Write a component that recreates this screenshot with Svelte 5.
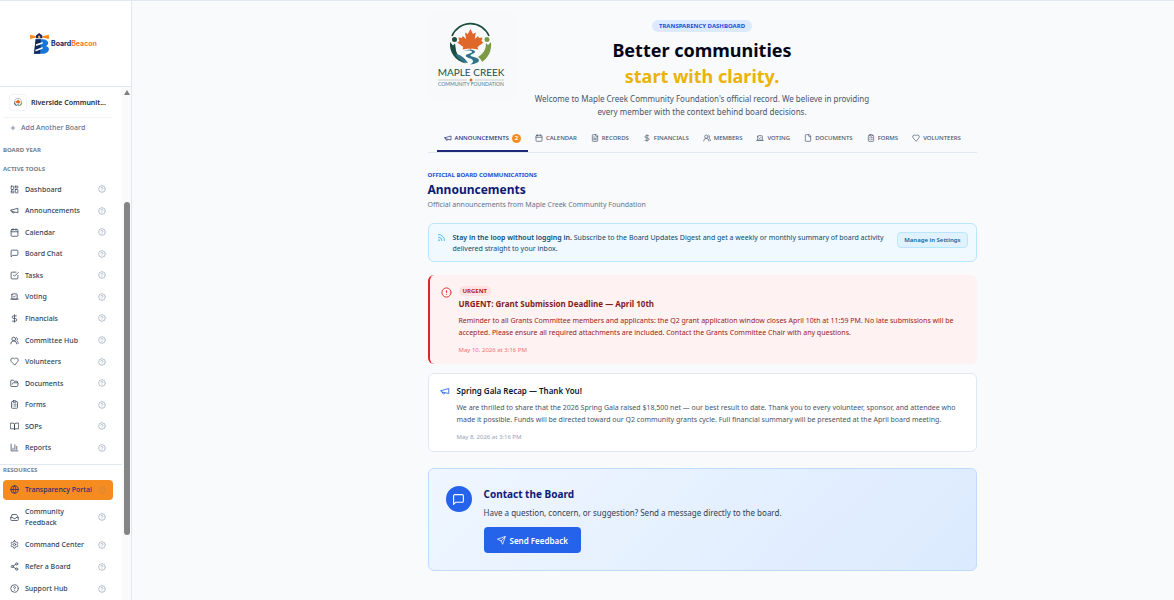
<script lang="ts">
	type NavItem = { label: string; icon: string };

	const icons: Record<string, string> = {
		dashboard: 'M4 3h5a1 1 0 0 1 1 1v7a1 1 0 0 1-1 1H4a1 1 0 0 1-1-1V4a1 1 0 0 1 1-1zM15 3h5a1 1 0 0 1 1 1v3a1 1 0 0 1-1 1h-5a1 1 0 0 1-1-1V4a1 1 0 0 1 1-1zM15 12h5a1 1 0 0 1 1 1v7a1 1 0 0 1-1 1h-5a1 1 0 0 1-1-1v-7a1 1 0 0 1 1-1zM4 16h5a1 1 0 0 1 1 1v3a1 1 0 0 1-1 1H4a1 1 0 0 1-1-1v-3a1 1 0 0 1 1-1z',
		megaphone: 'm3 11 18-5v12L3 14v-3zM11.6 16.8a3 3 0 1 1-5.8-1.6',
		calendar: 'M8 2v4M16 2v4M3 10h18M5 4h14a2 2 0 0 1 2 2v14a2 2 0 0 1-2 2H5a2 2 0 0 1-2-2V6a2 2 0 0 1 2-2z',
		message: 'M21 15a2 2 0 0 1-2 2H7l-4 4V5a2 2 0 0 1 2-2h14a2 2 0 0 1 2 2z',
		check: 'm9 11 3 3L22 4M21 12v7a2 2 0 0 1-2 2H5a2 2 0 0 1-2-2V5a2 2 0 0 1 2-2h11',
		vote: 'm9 12 2 2 4-4M5 7c0-1.1.9-2 2-2h10a2 2 0 0 1 2 2v12H5V7ZM22 19H2',
		dollar: 'M12 2v20M17 5H9.5a3.5 3.5 0 0 0 0 7h5a3.5 3.5 0 0 1 0 7H6',
		users: 'M18 21a8 8 0 0 0-16 0M15 8A5 5 0 1 1 5 8a5 5 0 0 1 10 0M22 20c0-3.37-2-6.5-4-8a5 5 0 0 0-.45-8.3',
		heart: 'M19 14c1.49-1.46 3-3.21 3-5.5A5.5 5.5 0 0 0 16.5 3c-1.76 0-3 .5-4.5 2-1.5-1.5-2.74-2-4.5-2A5.5 5.5 0 0 0 2 8.5c0 2.3 1.5 4.05 3 5.5l7 7Z',
		folder: 'm6 14 1.5-2.9A2 2 0 0 1 9.24 10H20a2 2 0 0 1 1.94 2.5l-1.54 6a2 2 0 0 1-1.95 1.5H4a2 2 0 0 1-2-2V5a2 2 0 0 1 2-2h3.9a2 2 0 0 1 1.69.9l.81 1.2a2 2 0 0 0 1.67.9H18a2 2 0 0 1 2 2v2',
		clipboard: 'M9 2h6a1 1 0 0 1 1 1v2a1 1 0 0 1-1 1H9a1 1 0 0 1-1-1V3a1 1 0 0 1 1-1zM16 4h2a2 2 0 0 1 2 2v14a2 2 0 0 1-2 2H6a2 2 0 0 1-2-2V6a2 2 0 0 1 2-2h2M12 11h4M12 16h4M8 11h.01M8 16h.01',
		book: 'M2 3h6a4 4 0 0 1 4 4v14a3 3 0 0 0-3-3H2zM22 3h-6a4 4 0 0 0-4 4v14a3 3 0 0 1 3-3h7z',
		chart: 'M3 3v18h18M18 17V9M13 17V5M8 17v-3',
		globe: 'M22 12a10 10 0 1 1-20 0 10 10 0 0 1 20 0M12 2a14.5 14.5 0 0 0 0 20 14.5 14.5 0 0 0 0-20M2 12h20',
		inbox: 'M22 12h-6l-2 3h-4l-2-3H2M5.45 5.11 2 12v6a2 2 0 0 0 2 2h16a2 2 0 0 0 2-2v-6l-3.45-6.89A2 2 0 0 0 16.76 4H7.24a2 2 0 0 0-1.79 1.11z',
		settings: 'M12.22 2h-.44a2 2 0 0 0-2 2v.18a2 2 0 0 1-1 1.73l-.43.25a2 2 0 0 1-2 0l-.15-.08a2 2 0 0 0-2.73.73l-.22.38a2 2 0 0 0 .73 2.73l.15.1a2 2 0 0 1 1 1.72v.51a2 2 0 0 1-1 1.74l-.15.09a2 2 0 0 0-.73 2.73l.22.38a2 2 0 0 0 2.73.73l.15-.08a2 2 0 0 1 2 0l.43.25a2 2 0 0 1 1 1.73V20a2 2 0 0 0 2 2h.44a2 2 0 0 0 2-2v-.18a2 2 0 0 1 1-1.73l.43-.25a2 2 0 0 1 2 0l.15.08a2 2 0 0 0 2.73-.73l.22-.39a2 2 0 0 0-.73-2.73l-.15-.08a2 2 0 0 1-1-1.74v-.5a2 2 0 0 1 1-1.74l.15-.09a2 2 0 0 0 .73-2.73l-.22-.38a2 2 0 0 0-2.73-.73l-.15.08a2 2 0 0 1-2 0l-.43-.25a2 2 0 0 1-1-1.73V4a2 2 0 0 0-2-2zM15 12a3 3 0 1 1-6 0 3 3 0 0 1 6 0',
		share: 'M21 5a3 3 0 1 1-6 0 3 3 0 0 1 6 0M9 12a3 3 0 1 1-6 0 3 3 0 0 1 6 0M21 19a3 3 0 1 1-6 0 3 3 0 0 1 6 0M8.59 13.51l6.83 3.98M15.41 6.51l-6.82 3.98',
		help: 'M22 12a10 10 0 1 1-20 0 10 10 0 0 1 20 0M9.09 9a3 3 0 0 1 5.83 1c0 2-3 3-3 3M12 17h.01',
		alert: 'M22 12a10 10 0 1 1-20 0 10 10 0 0 1 20 0M12 8v4M12 16h.01',
		rss: 'M4 11a9 9 0 0 1 9 9M4 4a16 16 0 0 1 16 16M6 19a1 1 0 1 1-2 0 1 1 0 0 1 2 0',
		send: 'm22 2-7 20-4-9-9-4ZM22 2 11 13',
		file: 'M15 2H6a2 2 0 0 0-2 2v16a2 2 0 0 0 2 2h12a2 2 0 0 0 2-2V7ZM14 2v4a2 2 0 0 0 2 2h4',
		fileText: 'M15 2H6a2 2 0 0 0-2 2v16a2 2 0 0 0 2 2h12a2 2 0 0 0 2-2V7ZM14 2v4a2 2 0 0 0 2 2h4M10 9H8M16 13H8M16 17H8',
		plus: 'M5 12h14M12 5v14'
	};

	const tools: NavItem[] = [
		{ label: 'Dashboard', icon: 'dashboard' },
		{ label: 'Announcements', icon: 'megaphone' },
		{ label: 'Calendar', icon: 'calendar' },
		{ label: 'Board Chat', icon: 'message' },
		{ label: 'Tasks', icon: 'check' },
		{ label: 'Voting', icon: 'vote' },
		{ label: 'Financials', icon: 'dollar' },
		{ label: 'Committee Hub', icon: 'users' },
		{ label: 'Volunteers', icon: 'heart' },
		{ label: 'Documents', icon: 'folder' },
		{ label: 'Forms', icon: 'clipboard' },
		{ label: 'SOPs', icon: 'book' },
		{ label: 'Reports', icon: 'chart' }
	];

	const resources: NavItem[] = [
		{ label: 'Transparency Portal', icon: 'globe' },
		{ label: 'Community Feedback', icon: 'inbox' },
		{ label: 'Command Center', icon: 'settings' },
		{ label: 'Refer a Board', icon: 'share' },
		{ label: 'Support Hub', icon: 'help' }
	];

	const tabs: (NavItem & { count?: number })[] = [
		{ label: 'Announcements', icon: 'megaphone', count: 2 },
		{ label: 'Calendar', icon: 'calendar' },
		{ label: 'Records', icon: 'fileText' },
		{ label: 'Financials', icon: 'dollar' },
		{ label: 'Members', icon: 'users' },
		{ label: 'Voting', icon: 'vote' },
		{ label: 'Documents', icon: 'file' },
		{ label: 'Forms', icon: 'clipboard' },
		{ label: 'Volunteers', icon: 'heart' }
	];

	let activePage = $state('Transparency Portal');
	let activeTab = $state('Announcements');
</script>

{#snippet icon(name: string)}
	<svg class="icon" viewBox="0 0 24 24" aria-hidden="true"><path d={icons[name]} /></svg>
{/snippet}

{#snippet navItem(item: NavItem)}
	<a
		href="#{item.icon}"
		class="nav-item"
		class:active={activePage === item.label}
		onclick={() => (activePage = item.label)}
	>
		{@render icon(item.icon)}
		<span class="nav-label">{item.label}</span>
		<span class="hint">{@render icon('help')}</span>
	</a>
{/snippet}

{#snippet crest()}
	<path d="M14 16a20 20 0 0 1 37 0" fill="none" stroke="#1d4d3e" stroke-width="1.6" />
	<path d="M12 22c-1 10 5 19 16 21.500-6-5-9-9-10-13l-1-7-2 2z" fill="#1d4d3e" />
	<path d="M53 22c1 9-3 16-9 20-1-3-3-4-4-5 5-3 8-7 8-14l2 2z" fill="#7c9a45" />
	<circle cx="16.500" cy="19.500" r="2.500" fill="#1d4d3e" />
	<circle cx="49" cy="19.500" r="2.500" fill="#7c9a45" />
	<path
		d="M32.500 9l2.500 5 2.800-1.500-1 6.500 3.200-3 1 2 3.500-.5-1 3.500 2 1.500-6 4.500.8 2.500-7-1-.4 3.500h-1l-.4-3.500-7 1 .8-2.500-6-4.500 2-1.500-1-3.500 3.500.5 1-2 3.200 3-1-6.500 2.800 1.500z"
		fill="#e0672a"
	/>
	<path d="M22 31c8-3 14-2 14 1 0 2-8 2-6 4 1 1 8 1 9 4 0 2-2 3-4 4h-6c4-3 3-4 0-5-5-2-6-4 0-6 1-1-3-2-7-2z" fill="#fff" />
	<path d="M24 31.500c6-1.500 10-1 10 .5s-8 2-6 4.500c1 1.500 7 2 7 4.500 0 1.500-1 2.500-3 3.500 5-.5 9-2 9-4.500-1-3-8-3-8.500-4.500 0-1.500 5-2 4.500-4-.5-2-7-2.500-13 0zM17 34c5 0 10 4 13 9-5 0-10-4-13-9z" fill="#2f7489" />
{/snippet}

<div class="app">
	<aside class="sidebar">
		<a class="brand" href="#home" aria-label="BoardBeacon">
			<svg class="beacon" viewBox="0 0 54 60" aria-hidden="true">
				<path d="M0 5l17 4v4L0 17zM54 5L35 9v4l19 4z" fill="#f58a1f" />
				<path d="M26 0l9 7v8H17V7z" fill="#14275f" />
				<path d="M23 8h6v6h-6z" fill="#ffb13b" />
				<path d="M16 18h22c17 2 17 16 7 19 14 3 11 20-5 22H12z" fill="#1677d8" />
				<path d="M16 18h15l-2 41H11z" fill="#14275f" />
				<path d="M17 32l19-6v5l-19 6zM16 48l20-8v5l-21 8z" fill="#fff" />
			</svg>
			<span class="brand-name">Board<span>Beacon</span></span>
		</a>

		<div class="scroll-area">
			<nav>
				<button class="board">
					<span class="board-logo">
						<svg viewBox="8 2 48 46" aria-hidden="true">{@render crest()}</svg>
					</span>
					<span class="board-name">Riverside Communit...</span>
				</button>
				<button class="add-board">{@render icon('plus')} Add Another Board</button>
				<h2 class="year">Board Year</h2>
				<h2>Active Tools</h2>
				<div class="tools">
					{#each tools as item}
						{@render navItem(item)}
					{/each}
				</div>
				<div class="resources">
					<h2>Resources</h2>
					{#each resources as item}
						{@render navItem(item)}
					{/each}
				</div>
			</nav>
			<div class="scrollbar">
				<span class="arrow"></span>
				<span class="thumb"></span>
			</div>
		</div>
	</aside>

	<main>
		<div class="content">
			<header>
				<svg class="org-logo" viewBox="0 0 86 86" role="img" aria-label="Maple Creek Community Foundation">
					<rect width="86" height="86" fill="#f7f9fa" />
					<g transform="translate(10 7)">{@render crest()}</g>
					<text class="org-name" x="43" y="63">MAPLE CREEK</text>
					<path d="M10 67h29M47 67h29" stroke="#c5cfbe" />
					<circle cx="43" cy="67" r="1.500" fill="#e0672a" />
					<text class="org-sub" x="43" y="73">COMMUNITY FOUNDATION</text>
				</svg>
				<div class="hero">
					<span class="pill">Transparency Dashboard</span>
					<h1>Better communities<br /><em>start with clarity.</em></h1>
					<p>
						Welcome to Maple Creek Community Foundation's official record. We believe in providing
						every member with the context behind board decisions.
					</p>
				</div>
			</header>

			<div class="tabs" role="tablist">
				{#each tabs as tab}
					<button
						role="tab"
						aria-selected={activeTab === tab.label}
						class:active={activeTab === tab.label}
						onclick={() => (activeTab = tab.label)}
					>
						{@render icon(tab.icon)}
						{tab.label}
						{#if tab.count}<span class="count">{tab.count}</span>{/if}
					</button>
				{/each}
			</div>

			<section class="intro">
				<p class="eyebrow">Official Board Communications</p>
				<h2>Announcements</h2>
				<p>Official announcements from Maple Creek Community Foundation</p>
			</section>

			<div class="digest">
				{@render icon('rss')}
				<p>
					<strong>Stay in the loop without logging in.</strong> Subscribe to the Board Updates Digest
					and get a weekly or monthly summary of board activity delivered straight to your inbox.
				</p>
				<button>Manage in Settings</button>
			</div>

			<article class="urgent">
				{@render icon('alert')}
				<div>
					<span class="tag">Urgent</span>
					<h3>URGENT: Grant Submission Deadline — April 10th</h3>
					<p>
						Reminder to all Grants Committee members and applicants: the Q2 grant application window
						closes April 10th at 11:59 PM. No late submissions will be accepted. Please ensure all
						required attachments are included. Contact the Grants Committee Chair with any questions.
					</p>
					<time>May 10, 2026 at 3:16 PM</time>
				</div>
			</article>

			<article>
				{@render icon('megaphone')}
				<div>
					<h3>Spring Gala Recap — Thank You!</h3>
					<p>
						We are thrilled to share that the 2026 Spring Gala raised $18,500 net — our best result
						to date. Thank you to every volunteer, sponsor, and attendee who made it possible. Funds
						will be directed toward our Q2 community grants cycle. Full financial summary will be
						presented at the April board meeting.
					</p>
					<time>May 8, 2026 at 3:16 PM</time>
				</div>
			</article>

			<section class="contact">
				<span class="contact-icon">{@render icon('message')}</span>
				<div>
					<h2>Contact the Board</h2>
					<p>Have a question, concern, or suggestion? Send a message directly to the board.</p>
					<button>{@render icon('send')} Send Feedback</button>
				</div>
			</section>
		</div>
	</main>
</div>

<style>
	:global(body) {
		background: #f8fafc;
	}

	.app {
		display: flex;
		height: 100vh;
		box-sizing: border-box;
		border-top: 1px solid #e2e8f0;
		font-family: 'Noto Sans', 'Open Sans', sans-serif;
		font-size: 7px;
		color: #334155;
	}

	h1,
	h2,
	h3,
	p {
		margin: 0;
	}

	button {
		border: none;
		background: none;
		padding: 0;
		font: inherit;
		color: inherit;
		cursor: pointer;
	}

	a {
		color: inherit;
		text-decoration: none;
	}

	.icon {
		width: 9px;
		height: 9px;
		flex-shrink: 0;
		fill: none;
		stroke: currentColor;
		stroke-width: 2;
		stroke-linecap: round;
		stroke-linejoin: round;
	}

	/* sidebar */
	.sidebar {
		display: flex;
		flex-direction: column;
		flex: 0 0 131px;
		background: #fff;
		border-right: 1px solid #e2e8f0;
	}

	.brand {
		display: flex;
		align-items: center;
		justify-content: center;
		gap: 2px;
		height: 85px;
		padding-right: 4px;
		border-bottom: 1px solid #e2e8f0;
	}

	.beacon {
		width: 19px;
		height: 21px;
	}

	.brand-name {
		font-family: Inter, sans-serif;
		font-size: 7px;
		font-weight: 700;
		color: #14275f;
	}

	.brand-name span {
		color: #f57c1f;
	}

	.scroll-area {
		display: flex;
		flex: 1;
		min-height: 0;
	}

	nav {
		flex: 1;
		min-width: 0;
		overflow: hidden;
	}

	.board {
		display: flex;
		align-items: center;
		gap: 4px;
		width: 108px;
		height: 31px;
		margin-left: 4px;
		padding: 0 0 0 5px;
		border-bottom: 1px solid #f1f5f9;
	}

	.board-logo {
		display: flex;
		flex-shrink: 0;
		padding: 3px;
		border: 1px solid #f1f5f9;
		border-radius: 3px;
	}

	.board-logo svg {
		width: 10px;
		height: 9px;
	}

	.board-name {
		font-weight: 600;
		color: #1e293b;
		white-space: nowrap;
	}

	.add-board {
		display: flex;
		align-items: center;
		gap: 5px;
		height: 19px;
		padding-left: 10px;
		font-weight: 500;
		color: #64748b;
	}

	.add-board .icon {
		width: 6px;
		height: 6px;
		stroke-width: 3;
	}

	nav h2 {
		padding-left: 3px;
		font-size: 6px;
		font-weight: 700;
		line-height: 10px;
		color: #74808f;
		text-transform: uppercase;
	}

	.year {
		margin: 8px 0 9px;
	}

	.tools {
		display: grid;
		grid-auto-rows: 1fr;
		height: 280px;
		margin-top: 5px;
	}

	.nav-item {
		display: flex;
		align-items: center;
		gap: 6px;
		width: 96px;
		margin: 0 0 2px 3px;
		padding: 4px 7px 5px;
		border-radius: 4px;
		font-weight: 500;
		line-height: 11px;
		color: #334155;
	}

	.tools .nav-item {
		margin-bottom: 1px;
		padding-top: 0;
		padding-bottom: 0;
	}

	.nav-label {
		flex: 1;
	}

	.hint {
		display: flex;
		color: #94a3b8;
	}

	.nav-item .hint .icon {
		width: 8px;
		height: 8px;
	}

	.nav-item.active {
		background: #f68b1f;
		color: #1e2a78;
	}

	.nav-item.active .hint {
		color: #c98a4a;
	}

	.resources {
		margin-top: 5px;
		border-top: 1px solid #e2e8f0;
	}

	.resources h2 {
		margin-bottom: 5px;
	}

	.scrollbar {
		display: flex;
		flex-direction: column;
		align-items: center;
		width: 9px;
		background: #fafafa;
	}

	.arrow {
		margin-top: 3px;
		border: 3px solid transparent;
		border-top: none;
		border-bottom: 5px solid #7f7f7f;
	}

	.thumb {
		width: 6px;
		height: 65%;
		margin-top: 107px;
		border-radius: 3px;
		background: #858585;
	}

	/* page */
	main {
		flex: 1;
		padding: 12px 0 28px 98px;
	}

	.content {
		max-width: 549px;
		margin: 0 auto;
	}

	header {
		display: grid;
		grid-template-columns: 86px 1fr 86px;
	}

	.org-logo {
		width: 86px;
		height: 86px;
	}

	.org-name {
		font-family: Lato, sans-serif;
		font-size: 10px;
		fill: #234f45;
		text-anchor: middle;
	}

	.org-sub {
		font-family: Lato, sans-serif;
		font-size: 5px;
		fill: #4d8090;
		text-anchor: middle;
	}

	.hero {
		padding: 7px 14px 0;
		text-align: center;
	}

	.pill {
		display: inline-block;
		padding: 0 7px;
		border-radius: 7px;
		background: #dbeafe;
		font-size: 6px;
		font-weight: 700;
		line-height: 12px;
		color: #1d4ed8;
		text-transform: uppercase;
	}

	h1 {
		margin-top: 5px;
		font-size: 18px;
		font-weight: 700;
		line-height: 26px;
		color: #020617;
	}

	h1 em {
		font-style: normal;
		color: #eab308;
	}

	.hero p {
		margin-top: 3px;
		font-size: 8px;
		line-height: 13px;
		color: #475569;
	}

	.tabs {
		display: flex;
		margin-top: 8px;
		padding: 0 9px;
		border-bottom: 1px solid #e2e8f0;
	}

	.tabs button {
		display: flex;
		align-items: center;
		gap: 3px;
		height: 26px;
		padding: 0 7px;
		border-bottom: 2px solid transparent;
		font-size: 6px;
		font-weight: 500;
		color: #475569;
		text-transform: uppercase;
	}

	.tabs .icon {
		width: 8px;
		height: 8px;
	}

	.tabs button.active {
		border-color: #1e2a78;
		color: #1e2a78;
	}

	.count {
		width: 9px;
		border-radius: 50%;
		background: #f68b1f;
		font-weight: 700;
		line-height: 9px;
		color: #fff;
		text-align: center;
	}

	.intro {
		padding: 16px 0 12px;
	}

	.intro p {
		line-height: 12px;
		color: #64748b;
	}

	.intro .eyebrow {
		font-size: 6px;
		font-weight: 700;
		color: #1d4ed8;
		text-transform: uppercase;
	}

	.intro h2 {
		font-size: 12px;
		line-height: 18px;
		color: #0b1a78;
	}

	.digest {
		display: flex;
		align-items: flex-start;
		gap: 7px;
		padding: 8px 8px 7px;
		border: 1px solid #bae6fd;
		border-radius: 6px;
		background: #f0f9ff;
		color: #0c4a6e;
	}

	.digest > .icon {
		margin-top: 1px;
		color: #0ea5e9;
	}

	.digest p {
		flex: 1;
		line-height: 11px;
	}

	.digest strong {
		font-weight: 600;
	}

	.digest button {
		padding: 0 6px;
		border: 1px solid #bae6fd;
		border-radius: 4px;
		background: #e0f2fe;
		font-size: 6px;
		font-weight: 600;
		line-height: 14px;
		color: #0369a1;
	}

	article {
		display: flex;
		gap: 7px;
		margin-top: 9px;
		padding: 11px 12px 9px 11px;
		border: 1px solid #e2e8f0;
		border-radius: 6px;
		background: #fff;
	}

	article > .icon {
		width: 10px;
		height: 10px;
		margin-top: 1px;
		color: #2563eb;
	}

	article h3 {
		font-size: 8px;
		font-weight: 600;
		line-height: 12px;
		color: #0f172a;
	}

	article p {
		margin-top: 5px;
		line-height: 12px;
		color: #475569;
	}

	time {
		display: block;
		margin-top: 6px;
		font-size: 6px;
		line-height: 10px;
		color: #94a3b8;
	}

	.urgent {
		margin-top: 13px;
		border: none;
		border-left: 2px solid #dc2626;
		background: #fef2f2;
	}

	.urgent > .icon {
		width: 11px;
		height: 11px;
		color: #dc2626;
	}

	.urgent h3 {
		font-weight: 700;
		color: #7f1d1d;
	}

	.urgent p {
		color: #991b1b;
	}

	.urgent time {
		color: #f87171;
	}

	.tag {
		display: table;
		margin-bottom: 2px;
		padding: 0 4px;
		border-radius: 5px;
		background: #fee2e2;
		font-size: 6px;
		font-weight: 700;
		line-height: 10px;
		color: #b91c1c;
		text-transform: uppercase;
	}

	.contact {
		display: flex;
		gap: 12px;
		margin-top: 16px;
		padding: 17px;
		border: 1px solid #bfdbfe;
		border-radius: 6px;
		background: linear-gradient(135deg, #eff6ff, #dbeafe);
	}

	.contact-icon {
		display: flex;
		align-items: center;
		justify-content: center;
		width: 26px;
		height: 26px;
		border-radius: 50%;
		background: #2563eb;
		color: #fff;
	}

	.contact-icon .icon {
		width: 13px;
		height: 13px;
	}

	.contact h2 {
		font-size: 10px;
		line-height: 16px;
		color: #0b1a78;
	}

	.contact p {
		margin-top: 4px;
		font-size: 8px;
		line-height: 14px;
	}

	.contact button {
		display: flex;
		align-items: center;
		gap: 4px;
		height: 26px;
		margin-top: 7px;
		padding: 0 13px;
		border-radius: 4px;
		background: #2563eb;
		font-size: 8px;
		font-weight: 600;
		color: #fff;
	}
</style>
